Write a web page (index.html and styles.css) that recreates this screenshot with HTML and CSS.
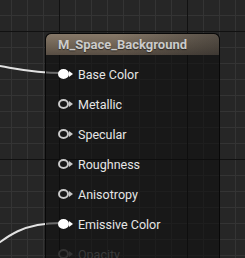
FILE: index.html
```html
<!DOCTYPE html>
<html>
<head>
<meta charset="utf-8">
<link rel="stylesheet" href="styles.css">
</head>
<body>
<div class="canvas">
  <svg class="wires" width="245" height="258" viewBox="0 0 245 258">
    <path d="M -30 62 C 10 66, 25 73, 62 73" />
    <path d="M -25 262 C 10 232, 25 223, 62 223" />
  </svg>
  <div class="node">
    <div class="header">M_Space_Background</div>
    <div class="pins">
      <div class="pin on"><span class="dot"></span><span class="label">Base Color</span></div>
      <div class="pin"><span class="dot"></span><span class="label">Metallic</span></div>
      <div class="pin"><span class="dot"></span><span class="label">Specular</span></div>
      <div class="pin"><span class="dot"></span><span class="label">Roughness</span></div>
      <div class="pin"><span class="dot"></span><span class="label">Anisotropy</span></div>
      <div class="pin on"><span class="dot"></span><span class="label">Emissive Color</span></div>
      <div class="pin off"><span class="dot"></span><span class="label">Opacity</span></div>
    </div>
  </div>
</div>
</body>
</html>
```
FILE: styles.css
```css
html, body {
  margin: 0;
  padding: 0;
  width: 245px;
  height: 258px;
  overflow: hidden;
}
body {
  background-color: #262626;
  background-image:
    linear-gradient(to right, #111111 1px, transparent 1px),
    linear-gradient(to bottom, #111111 1px, transparent 1px),
    linear-gradient(to right, #343434 1px, transparent 1px),
    linear-gradient(to bottom, #343434 1px, transparent 1px);
  background-size: 128px 128px, 128px 128px, 16px 16px, 16px 16px;
  background-position: 59px 0, 0 31px, 11px 0, 0 15px;
  font-family: Roboto, "Liberation Sans", sans-serif;
}
.canvas {
  position: relative;
  width: 245px;
  height: 258px;
  padding: 33px 0 0 45px;
  box-sizing: border-box;
  overflow: hidden;
}
.wires {
  position: absolute;
  left: 0;
  top: 0;
}
.wires path {
  fill: none;
  stroke: #e2e2e2;
  stroke-width: 2;
}
.node {
  position: relative;
  width: 175px;
  height: 225px;
  box-sizing: border-box;
  border: 1px solid #080808;
  border-bottom: none;
  border-radius: 6px 6px 0 0;
  background: rgba(12, 12, 12, 0.55);
  display: flex;
  flex-direction: column;
  overflow: hidden;
}
.header {
  flex: none;
  height: 21px;
  border-radius: 5px 5px 0 0;
  background:
    linear-gradient(to right, rgba(30, 30, 30, 0) 40%, rgba(30, 30, 30, 0.45) 100%),
    linear-gradient(to bottom, #867868 0%, #6c6052 60%, #574d43 100%);
  color: #cbcbcb;
  font-weight: bold;
  font-size: 13px;
  line-height: 21px;
  padding-left: 12px;
  text-shadow: 0 1px 1px rgba(0, 0, 0, 0.5);
}
.pins {
  display: flex;
  flex-direction: column;
  padding-top: 4px;
  padding-left: 12px;
}
.pin {
  flex: none;
  height: 30px;
  display: flex;
  align-items: center;
  gap: 8px;
}
.dot {
  position: relative;
  width: 11px;
  height: 10px;
  box-sizing: border-box;
  border-radius: 50%;
  border: 2px solid #c8c8c8;
  margin-right: 1px;
}
.dot::after {
  content: "";
  position: absolute;
  right: -6px;
  top: 0px;
  border-left: 4px solid #c8c8c8;
  border-top: 3px solid transparent;
  border-bottom: 3px solid transparent;
}
.pin.on .dot {
  background: #ffffff;
  border-color: #ffffff;
}
.pin.on .dot::after {
  border-left-color: #ffffff;
}
.label {
  color: #e6e6e6;
  font-size: 12.5px;
}
.pin.off .dot {
  border-color: #333333;
}
.pin.off .dot::after {
  border-left-color: #333333;
}
.pin.off .label {
  color: #3a3a3a;
}
```
